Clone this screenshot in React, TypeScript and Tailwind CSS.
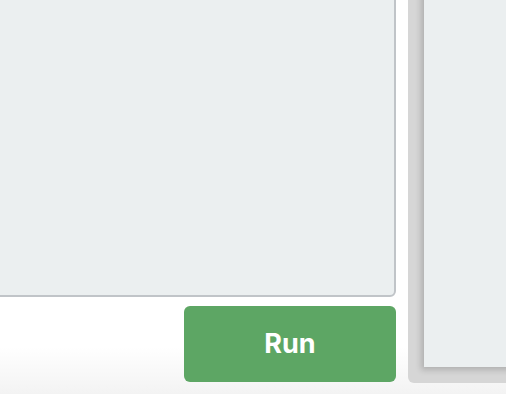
import React from 'react';

export default function App() {
    return (
        <div className="w-[506px] h-[394px] overflow-hidden flex items-start bg-[linear-gradient(to_bottom,#ffffff_0%,#ffffff_88%,#f3f3f3_100%)] font-['Inter',sans-serif]">
            {/* Editor column */}
            <div className="w-[396px] shrink-0 flex flex-col">
                <textarea
                    className="-mt-2 -ml-2 w-[404px] h-[305px] shrink-0 resize-none bg-[#ebeff0] border-2 border-[#c0c4c8] rounded-md outline-none"
                    readOnly
                />
                <button className="mt-[9px] self-end w-[212px] h-[76px] rounded-md bg-[#5da664] text-white text-[27px] font-bold">
                    Run
                </button>
            </div>

            {/* Output column */}
            <div className="ml-[12px] -mr-4 -mt-4 flex-1 h-[399px] bg-[#d6d6d6] rounded-bl-md pl-4 pb-4">
                <div className="h-full bg-[#ebeff0] shadow-[-3px_3px_6px_rgba(0,0,0,0.18)]" />
            </div>
        </div>
    );
}
